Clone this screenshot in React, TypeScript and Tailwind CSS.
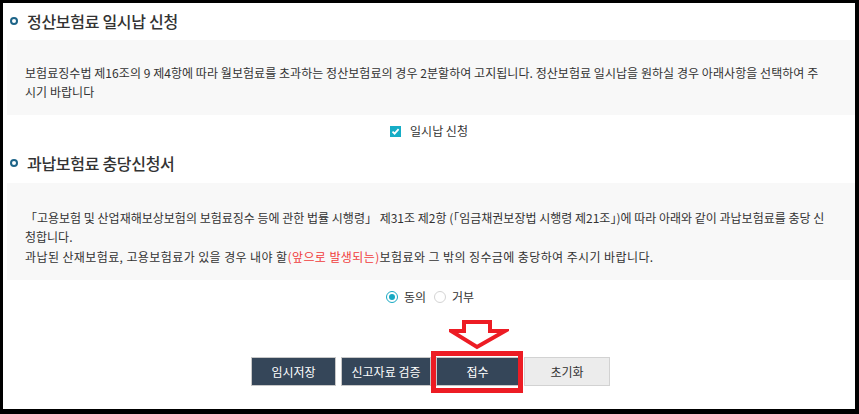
export default function App() {
  return (
    <div className="w-[859px] h-[414px] bg-black pt-[3px] pl-[3px] pr-[4px] pb-[5px] font-['Noto_Sans_CJK_KR',sans-serif] text-[#333]">
      <div className="w-full h-full bg-white pl-[4px] flex flex-col">
        <SectionTitle title="정산보험료 일시납 신청" className="h-[37px] pb-[1px]" />
        <div className="h-[75px] bg-[#f8f8f8] pl-[18px] pr-[20px] pt-[23px] text-[12px] leading-[19px] tracking-[0.05px]">
          보험료징수법 제16조의 9 제4항에 따라 월보험료를 초과하는 정산보험료의 경우 2분할하여 고지됩니다. 정산보험료 일시납을 원하실 경우 아래사항을 선택하여 주
          <br />
          시기 바랍니다
        </div>
        <div className="h-[32px] flex items-center justify-center gap-[9px] pr-[4px]">
          <span className="w-[11px] h-[11px] bg-[#16adc6] flex items-center justify-center">
            <svg width="9" height="9" viewBox="0 0 9 9">
              <path d="M1.5 4.6 L3.6 6.6 L7.6 2.2" stroke="#fff" strokeWidth="1.8" fill="none" />
            </svg>
          </span>
          <span className="text-[12px]">일시납 신청</span>
        </div>
        <SectionTitle title="과납보험료 충당신청서" className="h-[36px] pb-[4px]" />
        <div className="h-[97px] bg-[#f8f8f8] pl-[18px] pr-[20px] pt-[25px] text-[12px] leading-[19px]">
          <p>
            「고용보험 및 산업재해보상보험의 보험료징수 등에 관한 법률 시행령」 제31조 제2항 (「임금채권보장법 시행령 제21조」)에 따라 아래와 같이 과납보험료를 충당 신
            <br />
            청합니다.
          </p>
          <p className="mt-[1px] tracking-[0.4px]">
            과납된 산재보험료, 고용보험료가 있을 경우 내야 할<span className="text-[#f03c3c]">(앞으로 발생되는)</span>보험료와 그 밖의 징수금에 충당하여 주시기 바랍니다.
          </p>
        </div>
        <div className="h-[34px] flex items-center justify-center gap-[6px] pr-[2px] text-[12px]">
          <span className="w-[12px] h-[12px] rounded-full border border-[#17a9c3] flex items-center justify-center">
            <span className="w-[6px] h-[6px] rounded-full bg-[#17a9c3]" />
          </span>
          <span>동의</span>
          <span className="ml-[2px] w-[12px] h-[12px] rounded-full border border-[#d4d4d4] bg-white" />
          <span>거부</span>
        </div>
        <div className="flex justify-center gap-[5px] mt-[43px] pl-[1px] pr-[2px] text-[12px]">
          <button className="w-[85px] h-[29px] bg-[#354659] border border-[#c8c8c8] text-white">임시저장</button>
          <button className="w-[90px] h-[29px] bg-[#354659] border border-[#c8c8c8] text-white">신고자료 검증</button>
          <div className="relative">
            <button className="w-[83px] h-[29px] bg-[#354659] border border-[#c8c8c8] text-white">접수</button>
            <div className="absolute left-[-5px] top-[-6px] w-[92px] h-[42px] border-[5px] border-[#ed1c24]" />
            <svg className="absolute left-[13px] top-[-37px]" width="60" height="30" viewBox="0 0 60 30">
              <path
                d="M15 2 L41 2 L41 11 L56 11 L28 27 L2 11 L15 11 Z"
                fill="#fff"
                stroke="#ed1c24"
                strokeWidth="4"
                strokeLinejoin="miter"
              />
            </svg>
          </div>
          <button className="w-[86px] h-[29px] bg-[#ececec] border border-[#d2d2d2]">초기화</button>
        </div>
      </div>
    </div>
  );
}

function SectionTitle({ title, className }: { title: string; className: string }) {
  return (
    <div className={`flex items-center gap-[9px] pl-[3px] ${className}`}>
      <span className="w-[8px] h-[8px] rounded-full border-[2.5px] border-[#1d6488]" />
      <h2 className="text-[16px] font-medium text-[#333] tracking-[-0.3px]">{title}</h2>
    </div>
  );
}
